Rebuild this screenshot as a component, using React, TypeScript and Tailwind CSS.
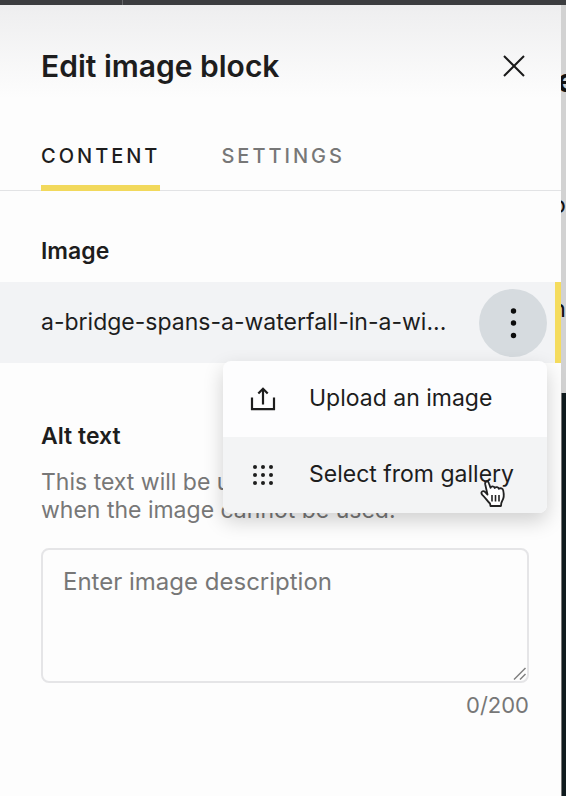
import React from 'react';

const tabs = [
  { id: 'content', label: 'CONTENT' },
  { id: 'settings', label: 'SETTINGS' },
];

const CloseIcon = () => (
  <svg width="24" height="24" viewBox="0 0 24 24" fill="none" stroke="#1a1a1a" strokeWidth="2" aria-hidden="true">
    <path d="M2 2l20 20M22 2L2 22" />
  </svg>
);

const KebabIcon = () => (
  <svg width="32" height="32" viewBox="0 0 32 32" fill="#0c0c0c" aria-hidden="true">
    <circle cx="16.5" cy="4" r="2.7" />
    <circle cx="16.5" cy="16" r="2.7" />
    <circle cx="16.5" cy="28.5" r="2.7" />
  </svg>
);

const UploadIcon = () => (
  <svg width="28" height="28" viewBox="0 0 28 28" fill="none" stroke="#1d1d1d" strokeWidth="2.2" aria-hidden="true">
    <path d="M3 12.5v11.7h22V12.5" />
    <path d="M14 19.5V4" />
    <path d="M9.300 8.500L14 3.700l4.700 4.800" />
  </svg>
);

const GridIcon = () => (
  <svg width="28" height="28" viewBox="0 0 28 28" fill="#1d1d1d" aria-hidden="true">
    {[6, 14, 22].map((y) =>
      [6, 14, 22].map((x) => <circle key={`${x}-${y}`} cx={x} cy={y} r="2" />)
    )}
  </svg>
);

const HandCursor = () => (
  <svg width="28" height="30" viewBox="0 0 28 30" aria-hidden="true">
    <path
      d="M8.5 15.500L6.200 5.200C5.600 2.200 9 1.400 9.900 4.200l1.600 4.600c.8-2 3.700-1.800 4.200.2 1.200-1.600 3.700-1 4.100.8 1.700-1.200 4-.3 4.400 1.600.8 3.600 1 7.400-.9 10.300l-1 2.500-.3 2.800H11.500l-.5-2.500c-2.800-2.500-4.200-5.500-7.700-8.700-2.500-2.800.7-4.800 2.900-2.600z"
      fill="#fff"
      stroke="#222"
      strokeWidth="1.8"
      strokeLinejoin="round"
    />
    <path d="M13 16v6.500M16.500 16v6.500M20 16v6.500" stroke="#222" strokeWidth="1.600" fill="none" />
  </svg>
);

const ResizeGrip = () => (
  <svg width="14" height="14" viewBox="0 0 14 14" fill="none" stroke="#808080" strokeWidth="1.5" aria-hidden="true">
    <path d="M1 12.500L12.500 1M7 12.500L12.500 7" />
  </svg>
);

const ActionMenu = () => (
  <div
    role="menu"
    className="absolute right-0 top-[72px] z-10 w-[324px] overflow-hidden rounded-lg bg-[#fdfdfe] shadow-[0_8px_20px_rgba(0,0,0,0.18)]"
  >
    <button role="menuitem" className="flex h-[76px] w-full items-center gap-8 pl-[26px] text-left">
      <UploadIcon />
      Upload an image
    </button>
    <button role="menuitem" className="flex h-[76px] w-full items-center gap-8 bg-[#f3f4f5] pl-[26px] text-left">
      <GridIcon />
      Select from gallery
    </button>
    <div className="pointer-events-none absolute bottom-1 right-10">
      <HandCursor />
    </div>
  </div>
);

// Sliver of the page being edited, next to the panel
const PagePreview = () => (
  <div className="flex w-[5px] shrink-0 flex-col overflow-hidden bg-[#d2d2d2] text-[#111]">
    <div className="flex h-[388px] shrink-0 flex-col overflow-hidden">
      <span className="-ml-1 mt-14 text-[32px] font-bold leading-10">e</span>
      <span className="mt-[88px] flex justify-end text-2xl leading-8">o</span>
      <span className="mt-[72px] flex justify-end text-2xl leading-8">n</span>
    </div>
    <div className="grow border-l border-[#777] bg-[#101b1e]" />
  </div>
);

const App: React.FC = () => {
  const active = 'content';

  return (
    <div className="flex min-h-screen flex-col bg-[#fdfdfd] font-['Inter','Liberation_Sans',sans-serif] text-[23px] text-[#1d1d1d]">
      <div className="flex h-[5px] bg-[#3c3d40]">
        <div className="w-[123px] border-r border-[#66676a]" />
      </div>

      <div className="flex grow">
        <main className="min-w-0 grow">
          <header className="bg-linear-to-b from-[#eeeeef] to-[#fdfdfd] to-50%">
            <div className="flex items-center justify-between px-[41px] pt-[41px]">
              <h1 className="text-[30px] font-semibold leading-10">Edit image block</h1>
              <button aria-label="Close" className="-mr-1.5">
                <CloseIcon />
              </button>
            </div>
            <nav role="tablist" className="mt-[54px] flex gap-[61px] border-b border-[#e2e3e5] px-[41px]">
              {tabs.map((tab) => (
                <button
                  key={tab.id}
                  role="tab"
                  aria-selected={tab.id === active}
                  className={`-mb-px border-b-6 pb-[13px] text-xl font-medium leading-8 tracking-[3px] ${
                    tab.id === active ? 'border-[#f2d95c]' : 'border-transparent text-[#777]'
                  }`}
                >
                  {tab.label}
                </button>
              ))}
            </nav>
          </header>

          <section>
            <h2 className="px-[41px] pb-[15px] pt-11 font-semibold leading-8">Image</h2>
            <div className="flex h-[81px] items-center justify-between border-r-6 border-[#f5dc5e] bg-[#f2f3f5] pl-[41px] pr-2">
              <span className="whitespace-nowrap">a-bridge-spans-a-waterfall-in-a-wi...</span>
              <div className="relative shrink-0">
                <button
                  aria-label="Image options"
                  aria-haspopup="menu"
                  className="flex size-[68px] items-center justify-center rounded-full bg-[#d6dbdf]"
                >
                  <KebabIcon />
                </button>
                <ActionMenu />
              </div>
            </div>
          </section>

          <section className="pl-[41px] pr-8 pt-[57px]">
            <label htmlFor="alt-text" className="block font-semibold leading-8">
              Alt text
            </label>
            <p className="mt-4 leading-7 text-[#777]">
              This text will be used for people
              <br />
              when the image cannot be used.
            </p>
            <div className="relative mt-6">
              <textarea
                id="alt-text"
                placeholder="Enter image description"
                className="block h-[135px] w-full resize-none rounded-lg border-2 border-[#e5e5e7] px-5 py-4 text-2xl leading-8 placeholder:text-[#777]"
              />
              <div className="pointer-events-none absolute bottom-0.5 right-0.5">
                <ResizeGrip />
              </div>
            </div>
            <p className="mt-1.5 text-right text-[22px] leading-8 text-[#777]">0/200</p>
          </section>
        </main>

        <PagePreview />
      </div>
    </div>
  );
};

export default App;
